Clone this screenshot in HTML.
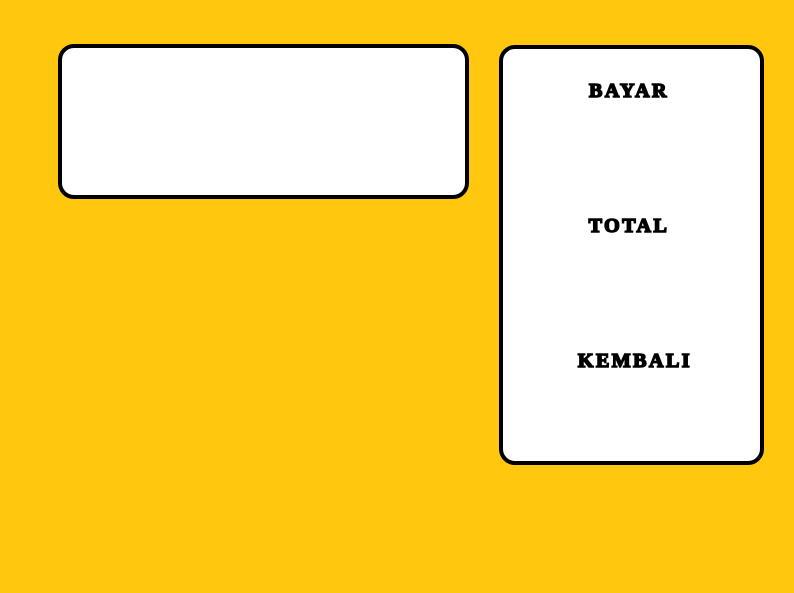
<!DOCTYPE html>
<html><head><style>
body{margin:0;width:794px;height:593px;background:#FFC80E;position:relative;overflow:hidden}
.b{position:absolute;background:#fff;border:4px solid #000;border-radius:16px;box-sizing:border-box}
.t{position:absolute;left:499px;width:264px;text-align:center;font-family:"Liberation Serif",serif;font-weight:bold;font-size:20px;letter-spacing:2.5px;-webkit-text-stroke:1.6px #000;color:#000}
</style></head><body>
<div class="b" style="left:58px;top:44px;width:411px;height:155px"></div>
<div class="b" style="left:499px;top:45px;width:265px;height:420px"></div>
<div class="t" style="top:80px;left:497px">BAYAR</div>
<div class="t" style="top:215px;left:497px">TOTAL</div>
<div class="t" style="top:350px;left:503px">KEMBALI</div>
</body></html>
